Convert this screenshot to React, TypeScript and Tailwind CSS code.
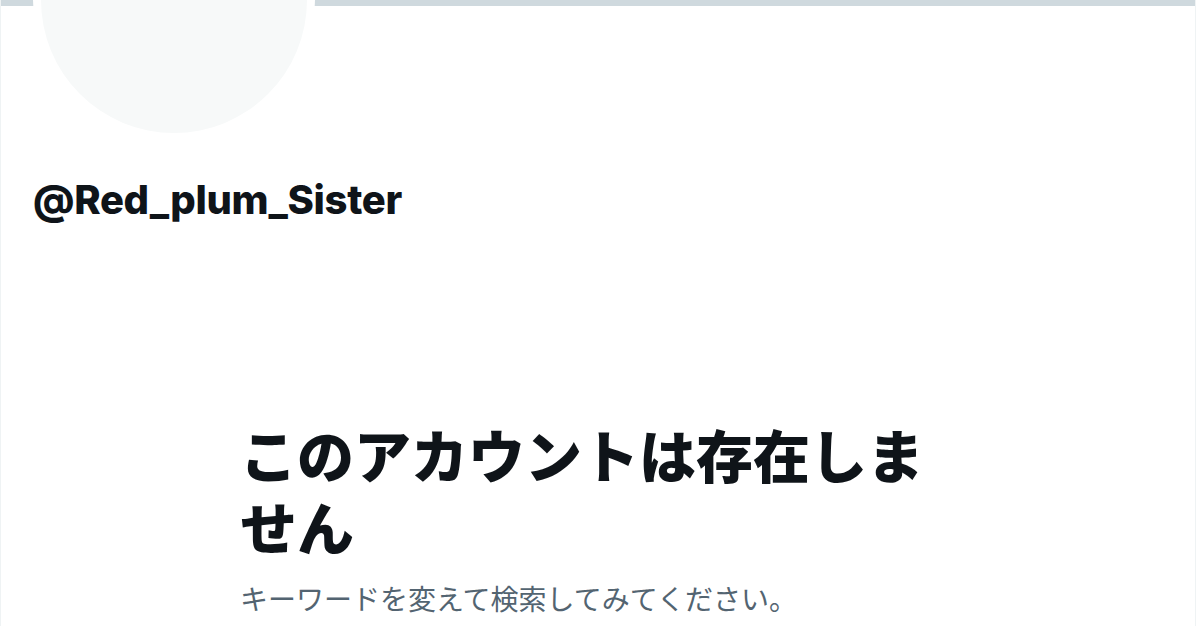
export default function App() {
  return (
    <div className="w-[1196px] h-[626px] overflow-hidden bg-white">
      <div className="h-full w-full border-x border-[#eff3f4] flex flex-col">
        <div className="h-[6px] w-full bg-[#cfd9de] shrink-0" />
        <div className="pl-[32px] shrink-0">
          <div className="-mt-[147px] w-[282px] h-[282px] rounded-full bg-white p-[8px]">
            <div className="w-full h-full rounded-full bg-[#f7f9f9]" />
          </div>
        </div>
        <div className="pl-[32px] mt-[35px]">
          <div
            className="text-[40px] leading-[48px] font-extrabold text-[#0f1419] tracking-[-0.3px]"
            style={{ fontFamily: '"Inter", "Liberation Sans", sans-serif' }}
          >
            @Red_plum_Sister
          </div>
        </div>
        <div className="mx-auto w-[716px] mt-[193px]">
          <div
            className="text-[57px] leading-[72px] font-black text-[#0f1419]"
            style={{ fontFamily: '"Noto Sans CJK JP", "Noto Sans", sans-serif' }}
          >
            このアカウントは存在しません
          </div>
          <div
            className="mt-[17px] text-[28px] leading-[40px] text-[#536471]"
            style={{ fontFamily: '"Noto Sans CJK JP", "Noto Sans", sans-serif' }}
          >
            キーワードを変えて検索してみてください。
          </div>
        </div>
      </div>
    </div>
  );
}
